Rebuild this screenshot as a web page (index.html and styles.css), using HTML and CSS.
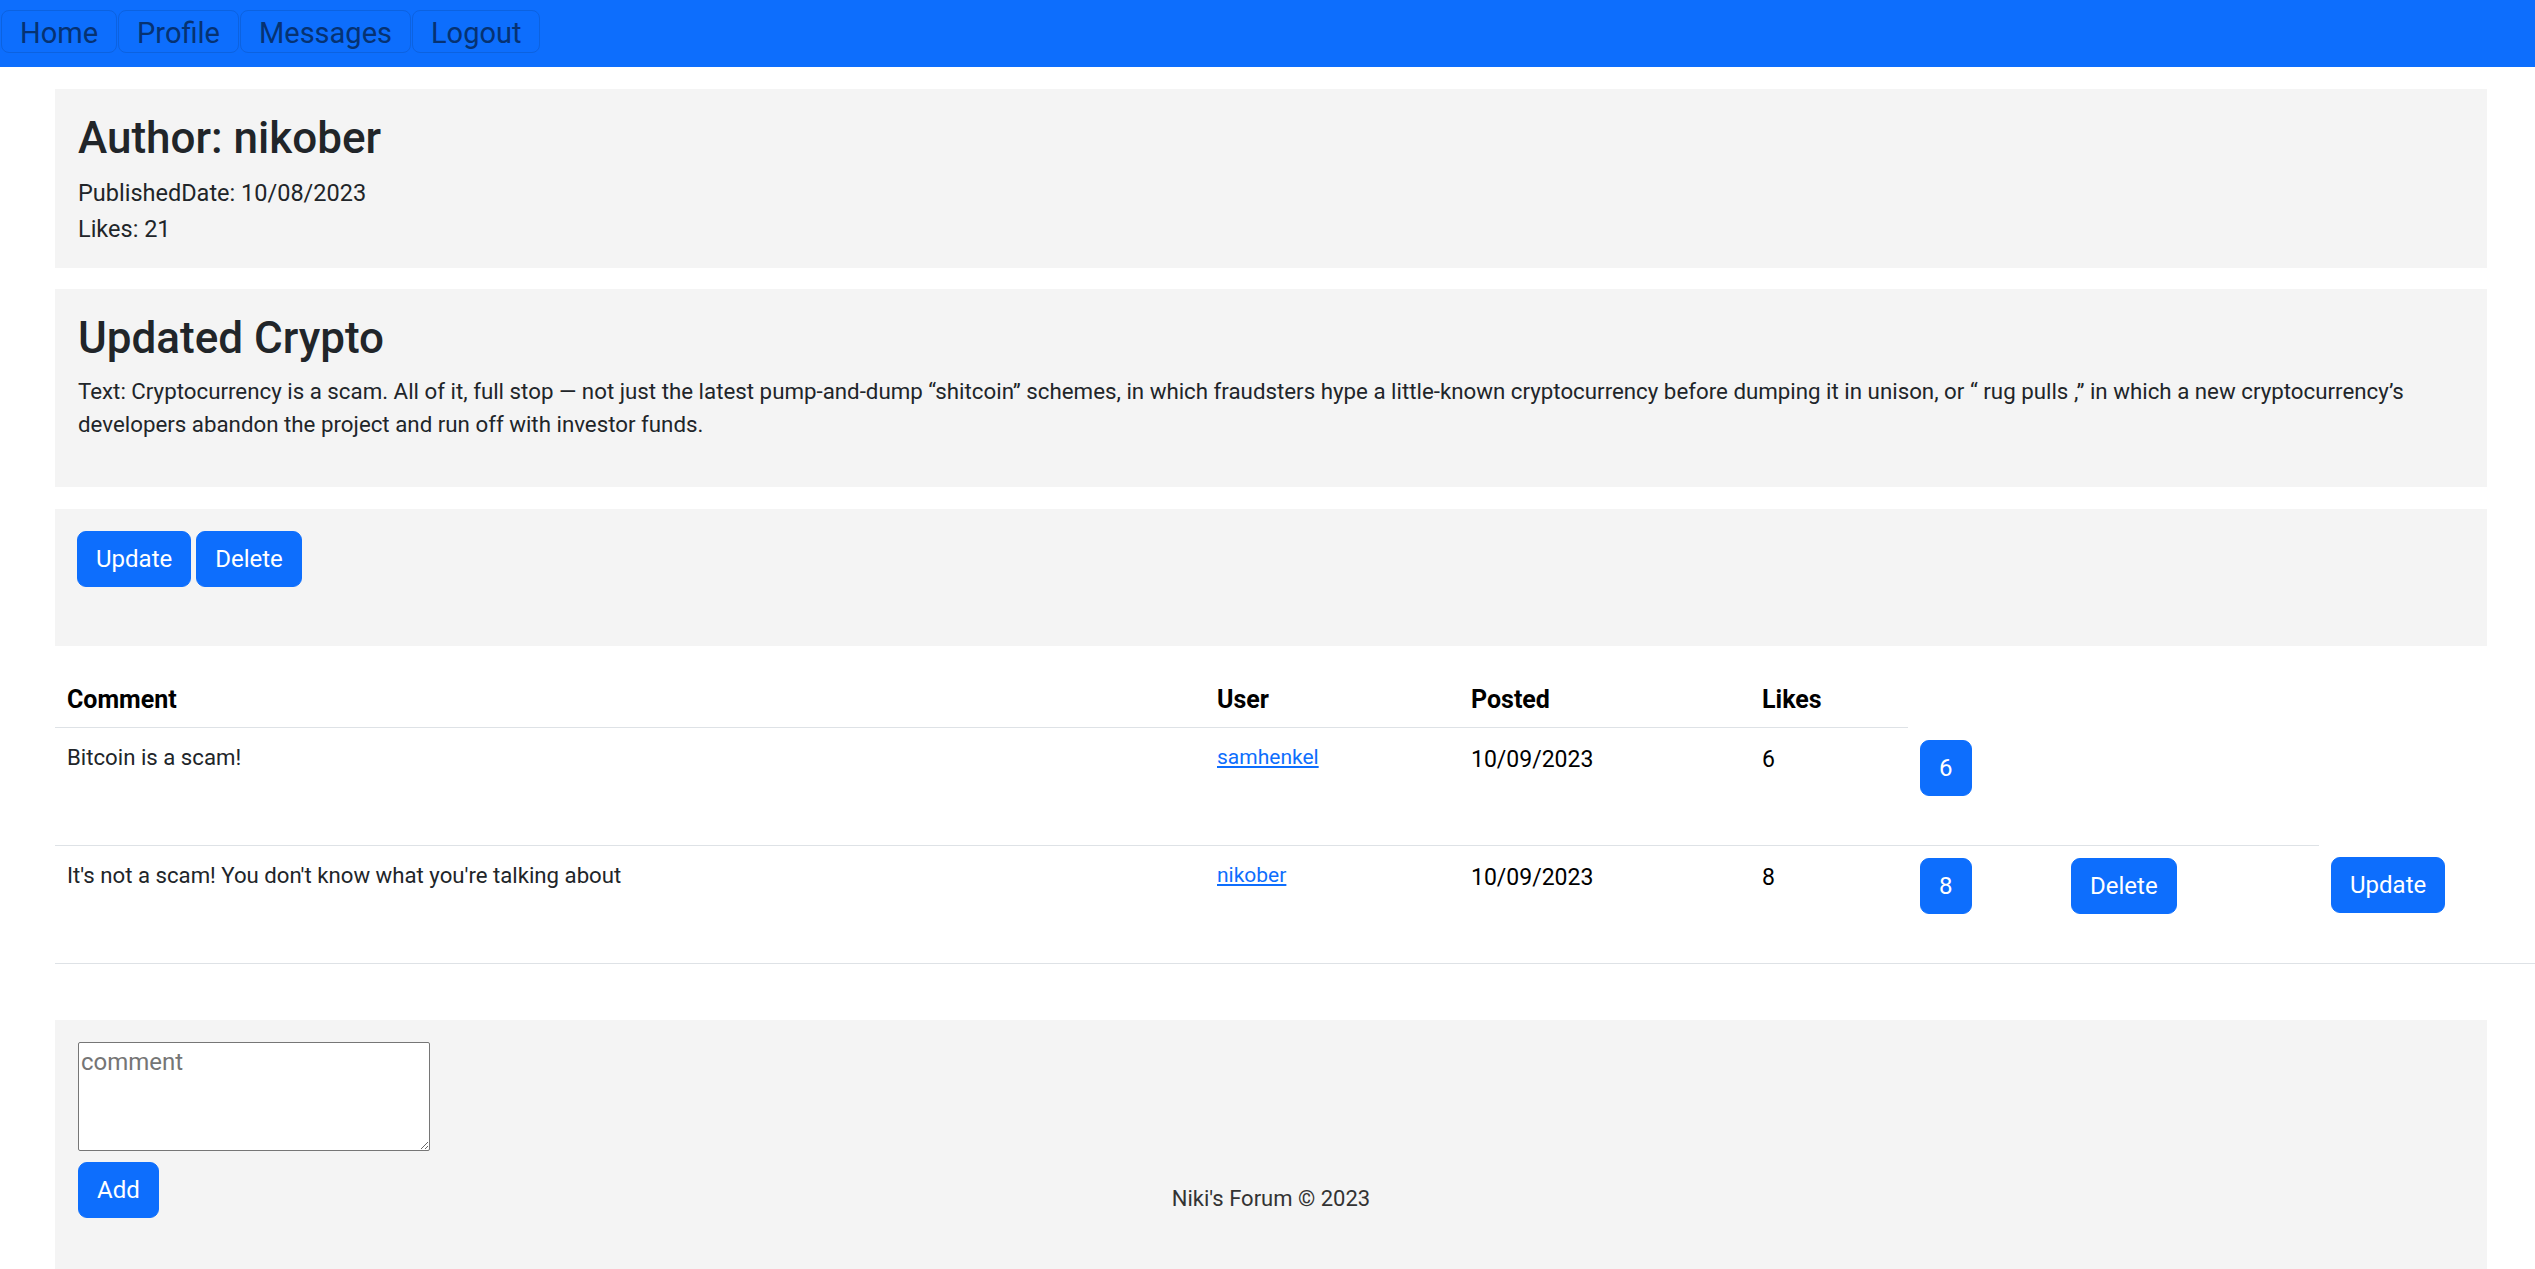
FILE: index.html
```html
<!DOCTYPE html>
<html lang="en">
<head>
<meta charset="utf-8">
<title>Niki's Forum - Updated Crypto</title>
<link rel="stylesheet" href="styles.css">
</head>
<body>
<nav class="topnav">
  <a class="nav-btn" href="#">Home</a>
  <a class="nav-btn" href="#">Profile</a>
  <a class="nav-btn" href="#">Messages</a>
  <a class="nav-btn" href="#">Logout</a>
</nav>
<main class="page">
  <section class="panel panel-info">
    <h3 class="panel-title">Author: nikober</h3>
    <div class="meta">PublishedDate: 10/08/2023</div>
    <div class="meta">Likes: 21</div>
  </section>
  <section class="panel panel-post">
    <h3 class="panel-title">Updated Crypto</h3>
    <p class="post-text">Text: Cryptocurrency is a scam. All of it, full stop — not just the latest pump-and-dump “shitcoin” schemes, in which fraudsters hype a little-known cryptocurrency before dumping it in unison, or “ rug pulls ,” in which a new cryptocurrency’s developers abandon the project and run off with investor funds.</p>
  </section>
  <section class="panel panel-actions">
    <button class="btn" type="button">Update</button>
    <button class="btn" type="button">Delete</button>
  </section>
  <table class="comments">
    <colgroup>
      <col class="col-comment"><col class="col-user"><col class="col-posted"><col class="col-likes"><col class="col-like-btn"><col class="col-delete"><col class="col-update">
    </colgroup>
    <thead>
      <tr><th>Comment</th><th>User</th><th>Posted</th><th>Likes</th></tr>
    </thead>
    <tbody>
      <tr>
        <td class="cell-comment">Bitcoin is a scam!</td>
        <td class="cell-user"><a class="user-link" href="#">samhenkel</a></td>
        <td>10/09/2023</td>
        <td>6</td>
        <td class="cell-btn"><div class="cell-form"><button class="btn" type="button">6</button></div></td>
        <td class="cell-btn"></td>
      </tr>
      <tr>
        <td class="cell-comment">It's not a scam! You don't know what you're talking about</td>
        <td class="cell-user"><a class="user-link" href="#">nikober</a></td>
        <td>10/09/2023</td>
        <td>8</td>
        <td class="cell-btn"><div class="cell-form"><button class="btn" type="button">8</button></div></td>
        <td class="cell-btn"><div class="cell-form"><button class="btn" type="button">Delete</button></div></td>
        <td class="cell-btn"><div class="cell-form"><button class="btn" type="button">Update</button></div></td>
      </tr>
    </tbody>
  </table>
  <section class="panel panel-form">
    <form class="comment-form">
      <textarea class="comment-input" placeholder="comment"></textarea>
      <button class="btn" type="button">Add</button>
    </form>
    <footer class="site-footer">Niki's Forum © 2023</footer>
    <div class="spacer"></div>
  </section>
</main>
</body>
</html>
```
FILE: styles.css
```css
html, body {
  margin: 0;
  padding: 0;
  overflow: hidden;
  background: #ffffff;
}

body {
  font-family: "Segoe UI", Roboto, "Noto Sans", "Liberation Sans", sans-serif;
  font-size: 24px;
  line-height: 1.5;
  color: #212529;
}

/* top navigation */
.topnav {
  display: flex;
  gap: 1px;
  height: 67px;
  box-sizing: border-box;
  padding: 10px 0 14px 1px;
  background: #0d6efd;
}

.nav-btn {
  display: block;
  font-size: 29px;
  line-height: 35px;
  padding: 5px 18px 1px;
  border: 1px solid #0c62e0;
  border-radius: 8px;
  background: #0d6efd;
  color: #063272;
  text-decoration: none;
}

/* page container */
.page {
  width: 2432px;
  margin-left: 55px;
  padding-top: 22px;
}

.panel {
  background: #f4f4f4;
  margin-bottom: 21px;
}

.panel-info {
  padding: 24px 23px 21px;
}

.panel-post {
  padding: 24px 23px 22px;
  margin-bottom: 22px;
}

.panel-actions {
  display: flex;
  gap: 5px;
  padding: 22px 22px 59px;
}

.panel-title {
  margin: 0 0 12px;
  font-size: 44px;
  line-height: 50px;
  font-weight: 500;
}

.meta {
  font-size: 23.5px;
  line-height: 36px;
}

.post-text {
  margin: 0 0 24px;
  font-size: 22.3px;
  line-height: 33px;
}

/* buttons */
.btn {
  font-family: inherit;
  font-size: 24px;
  line-height: 36px;
  padding: 9px 18px;
  border: 1px solid #0d6efd;
  border-radius: 9px;
  background: #0d6efd;
  color: #ffffff;
  cursor: pointer;
}

/* comments table */
.comments {
  table-layout: fixed;
  width: 2480px;
  border-collapse: collapse;
  margin-bottom: 56px;
  color: #000000;
}

.col-comment { width: 1150px; }
.col-user { width: 254px; }
.col-posted { width: 291px; }
.col-likes { width: 158px; }
.col-like-btn { width: 151px; }
.col-delete { width: 260px; }
.col-update { width: 216px; }

.comments th,
.comments td {
  padding: 14px 12px 10px;
  border-bottom: 1px solid #dee2e6;
  text-align: left;
  vertical-align: top;
  font-size: 23px;
  line-height: 36px;
}

.comments th {
  padding: 15px 12px 9px;
  font-size: 25px;
  font-weight: 700;
  vertical-align: bottom;
}

.comments td.cell-comment {
  font-size: 22.2px;
  line-height: 31px;
  color: #212529;
}

.comments td.cell-user {
  font-size: 21px;
  line-height: 31px;
}

.comments td.cell-btn {
  padding: 12px;
}

.user-link {
  color: #0d6efd;
  text-decoration: underline;
}

.cell-form {
  padding-bottom: 37px;
}

/* comment form + footer */
.panel-form {
  display: grid;
  grid-template-columns: 1fr auto 1fr;
  padding: 22px 23px 53px;
  margin-bottom: 0;
}

.comment-form {
  display: flex;
  flex-direction: column;
  align-items: flex-start;
  gap: 11px;
}

.comment-input {
  width: 352px;
  height: 109px;
  box-sizing: border-box;
  padding: 4px 2px 2px;
  margin: 0;
  border: 1px solid #767676;
  border-radius: 2px;
  background: #ffffff;
  font-family: inherit;
  font-size: 24px;
  line-height: 1.3;
  resize: both;
}

.comment-input::placeholder {
  color: #757575;
}

.site-footer {
  align-self: end;
  margin-bottom: 3px;
  font-size: 22px;
  line-height: 33px;
  color: #333333;
}
```
